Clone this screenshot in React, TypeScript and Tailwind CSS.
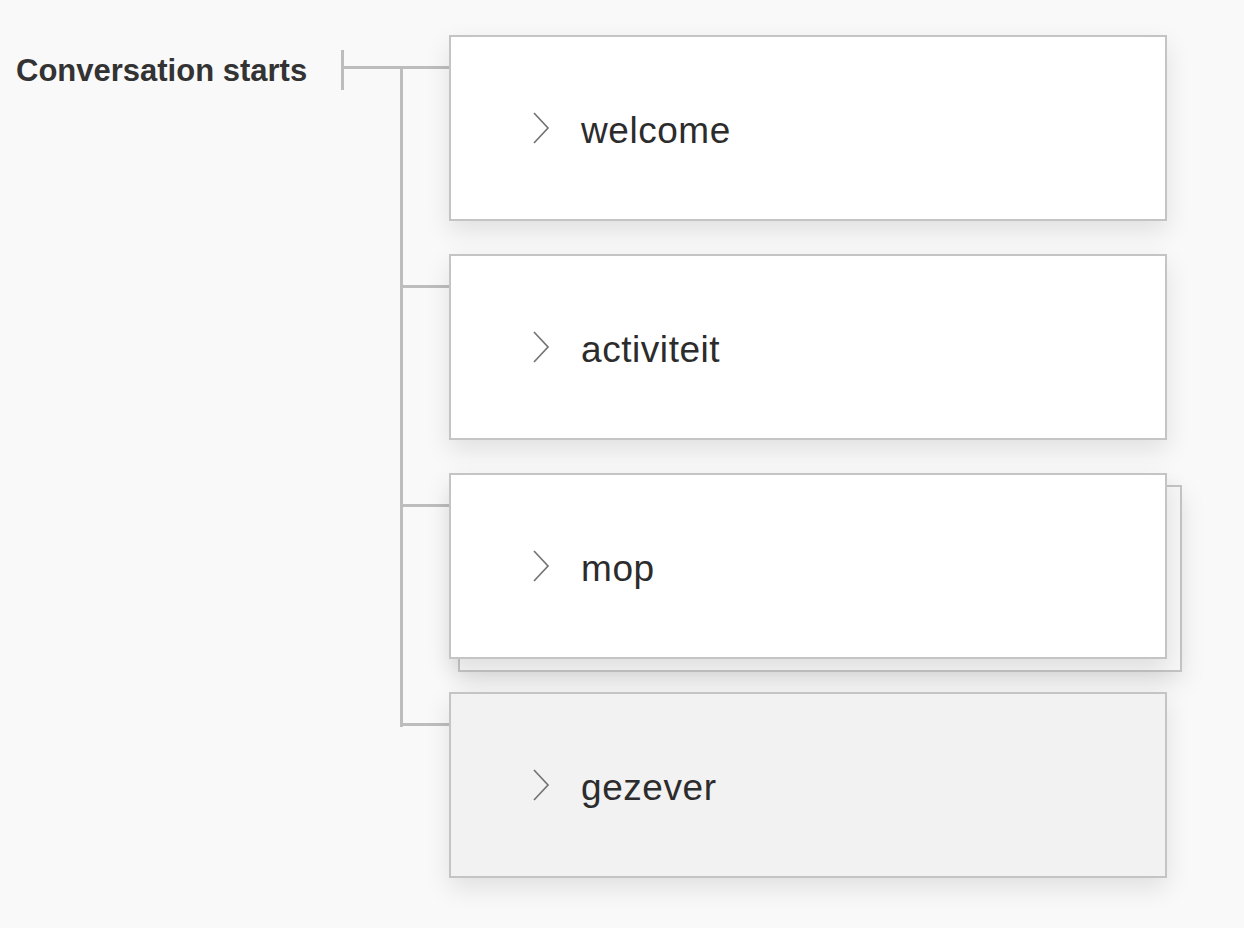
const starts = [
  { label: "welcome" },
  { label: "activiteit" },
  { label: "mop", stacked: true },
  { label: "gezever", muted: true },
];

function Chevron() {
  return (
    <svg width="18" height="32" viewBox="0 0 18 32" className="shrink-0">
      <path d="M2 1 L16 16 L2 31" fill="none" stroke="#747474" strokeWidth="1.7" />
    </svg>
  );
}

function Card({ label, muted }: { label: string; muted?: boolean }) {
  return (
    <div
      className={`relative z-10 h-[186px] flex items-center pl-[81px] gap-[31px] border-2 border-[#c4c4c4] shadow-[0_10px_24px_rgba(0,0,0,0.1)] ${
        muted ? "bg-[#f2f2f2]" : "bg-white"
      }`}
    >
      <Chevron />
      <span className="text-[37px] tracking-[0.015em] text-[#2c2c2c] font-['Liberation_Sans',Arial,sans-serif] leading-none pt-[5px]">
        {label}
      </span>
    </div>
  );
}

// connector lines: tick, trunk, one branch per card
function Connectors() {
  const branches = [250, 469, 688];
  return (
    <svg width="108" height="700" className="shrink-0">
      <g fill="#bdbdbd">
        <rect x="0" y="15" width="3" height="40" />
        <rect x="3" y="31" width="105" height="3" />
        <rect x="59" y="31" width="3" height="661" />
        {branches.map((y) => (
          <rect key={y} x="62" y={y} width="46" height="3" />
        ))}
      </g>
    </svg>
  );
}

export default function App() {
  return (
    <div className="min-h-screen w-full bg-[#f9f9f9] flex pt-[35px] font-['Liberation_Sans',Arial,sans-serif]">
      <div className="w-[341px] shrink-0 pl-4 pt-[18px]">
        <h1 className="text-[31px] leading-[36px] font-bold text-[#333]">
          Conversation starts
        </h1>
      </div>

      <Connectors />

      <div className="w-[718px] flex flex-col gap-[33px] pb-12">
        {starts.map((s) =>
          s.stacked ? (
            <div key={s.label} className="relative">
              <div className="absolute left-[9px] top-[12px] -right-[15px] -bottom-[13px] border-2 border-[#c4c4c4] bg-[#f7f7f7] shadow-[0_10px_24px_rgba(0,0,0,0.1)]" />
              <Card label={s.label} />
            </div>
          ) : (
            <Card key={s.label} label={s.label} muted={s.muted} />
          )
        )}
      </div>
    </div>
  );
}
